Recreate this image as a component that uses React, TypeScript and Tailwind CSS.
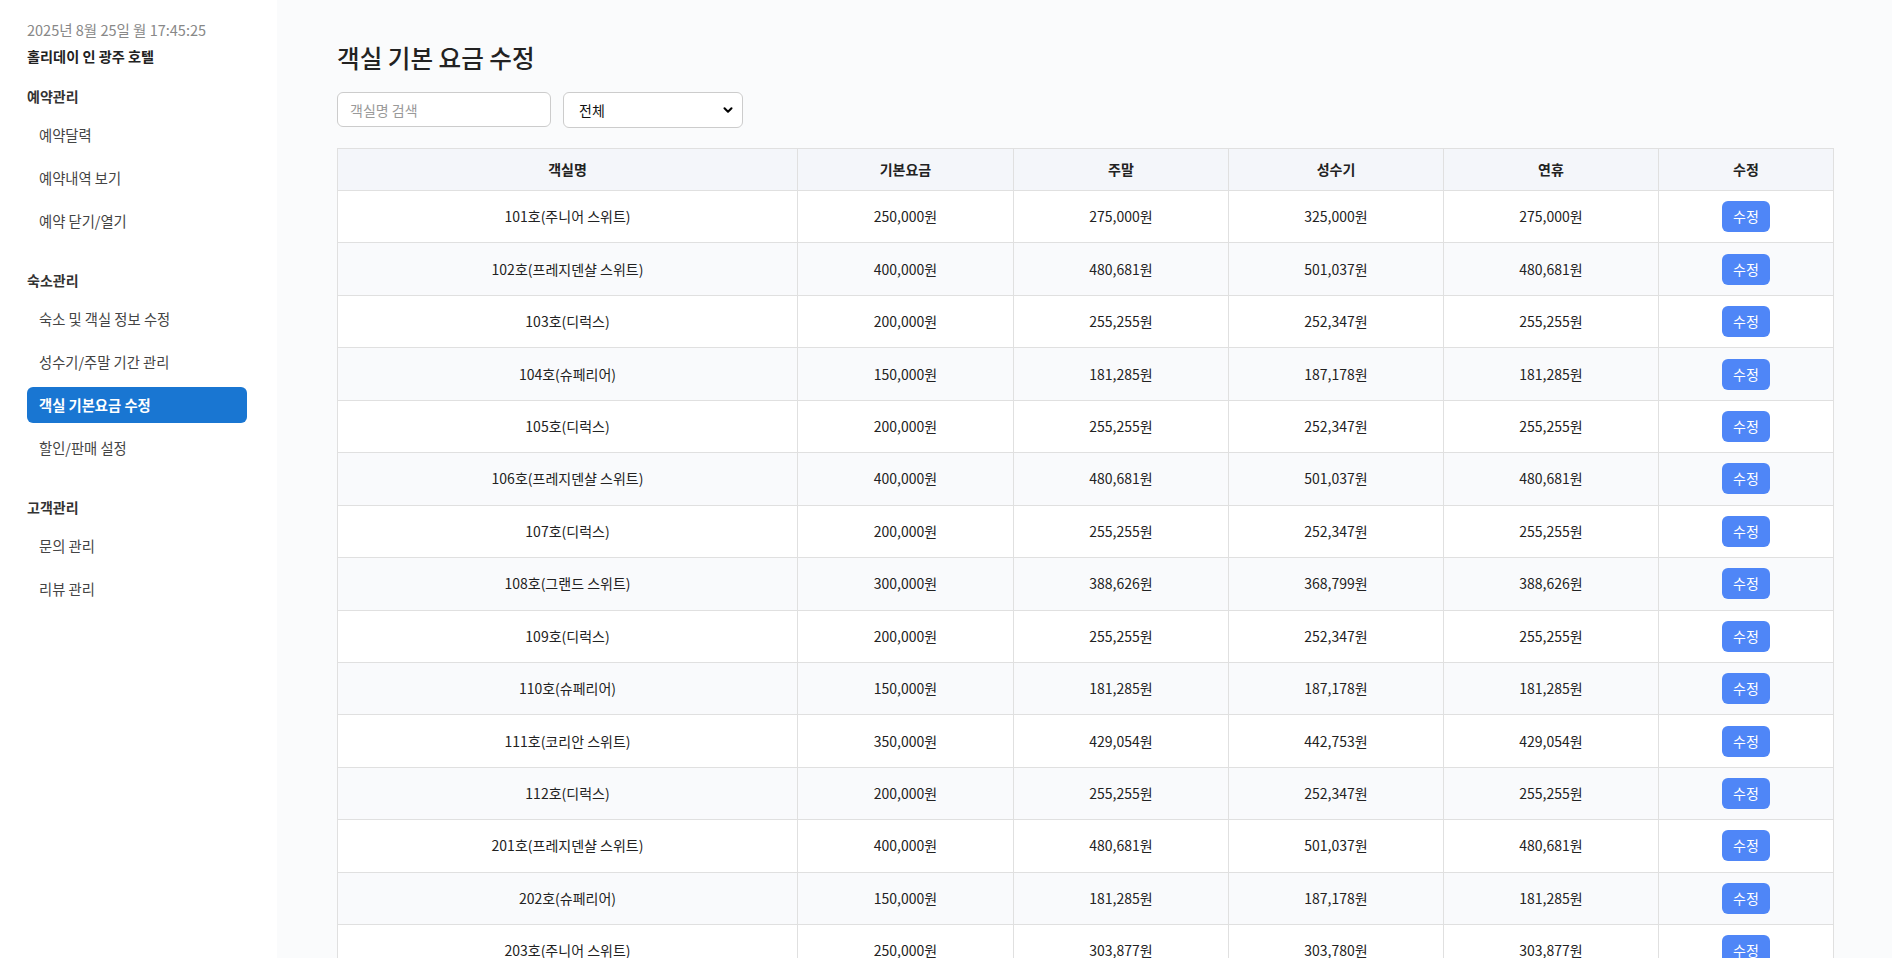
import { ChevronDown } from "lucide-react"

type Room = {
    name: string
    base: string
    weekend: string
    peak: string
    holiday: string
}

const rooms: Room[] = [
    { name: "101호(주니어 스위트)", base: "250,000원", weekend: "275,000원", peak: "325,000원", holiday: "275,000원" },
    { name: "102호(프레지덴샬 스위트)", base: "400,000원", weekend: "480,681원", peak: "501,037원", holiday: "480,681원" },
    { name: "103호(디럭스)", base: "200,000원", weekend: "255,255원", peak: "252,347원", holiday: "255,255원" },
    { name: "104호(슈페리어)", base: "150,000원", weekend: "181,285원", peak: "187,178원", holiday: "181,285원" },
    { name: "105호(디럭스)", base: "200,000원", weekend: "255,255원", peak: "252,347원", holiday: "255,255원" },
    { name: "106호(프레지덴샬 스위트)", base: "400,000원", weekend: "480,681원", peak: "501,037원", holiday: "480,681원" },
    { name: "107호(디럭스)", base: "200,000원", weekend: "255,255원", peak: "252,347원", holiday: "255,255원" },
    { name: "108호(그랜드 스위트)", base: "300,000원", weekend: "388,626원", peak: "368,799원", holiday: "388,626원" },
    { name: "109호(디럭스)", base: "200,000원", weekend: "255,255원", peak: "252,347원", holiday: "255,255원" },
    { name: "110호(슈페리어)", base: "150,000원", weekend: "181,285원", peak: "187,178원", holiday: "181,285원" },
    { name: "111호(코리안 스위트)", base: "350,000원", weekend: "429,054원", peak: "442,753원", holiday: "429,054원" },
    { name: "112호(디럭스)", base: "200,000원", weekend: "255,255원", peak: "252,347원", holiday: "255,255원" },
    { name: "201호(프레지덴샬 스위트)", base: "400,000원", weekend: "480,681원", peak: "501,037원", holiday: "480,681원" },
    { name: "202호(슈페리어)", base: "150,000원", weekend: "181,285원", peak: "187,178원", holiday: "181,285원" },
    { name: "203호(주니어 스위트)", base: "250,000원", weekend: "303,877원", peak: "303,780원", holiday: "303,877원" },
    { name: "204호(디럭스)", base: "200,000원", weekend: "255,255원", peak: "252,347원", holiday: "255,255원" },
    { name: "205호(슈페리어)", base: "150,000원", weekend: "181,285원", peak: "187,178원", holiday: "181,285원" },
]

const menu = [
    { title: "예약관리", items: ["예약달력", "예약내역 보기", "예약 닫기/열기"] },
    { title: "숙소관리", items: ["숙소 및 객실 정보 수정", "성수기/주말 기간 관리", "객실 기본요금 수정", "할인/판매 설정"] },
    { title: "고객관리", items: ["문의 관리", "리뷰 관리"] },
]

function Sidebar() {
    return (
        <aside className="w-[277px] shrink-0 bg-white pl-[27px] pr-[30px] pt-[20px]">
            <div className="text-[14.5px] leading-[20px] text-[#888]">2025년 8월 25일 월 17:45:25</div>
            <div className="mt-[6px] text-[14.2px] leading-[20px] font-bold text-[#222]">홀리데이 인 광주 호텔</div>

            <nav className="mt-[20px] flex flex-col gap-[31px]">
                {menu.map((section) => (
                    <div key={section.title}>
                        <div className="text-[14px] leading-[20px] font-bold text-[#333]">{section.title}</div>
                        <ul className="mt-[11px] flex flex-col gap-[7px]">
                            {section.items.map((item) => {
                                const active = item === "객실 기본요금 수정"
                                return (
                                    <li
                                        key={item}
                                        className={
                                            active
                                                ? "flex h-9 items-center rounded-[6px] bg-[#1976d2] pl-3 text-[14.3px] font-bold text-white"
                                                : "flex h-9 items-center rounded-[6px] pl-3 text-[14.3px] text-[#444]"
                                        }
                                    >
                                        {item}
                                    </li>
                                )
                            })}
                        </ul>
                    </div>
                ))}
            </nav>
        </aside>
    )
}

export default function App() {
    return (
        <div
            className="flex min-h-screen bg-[#fafbfc] text-[#222]"
            style={{ fontFamily: '"Noto Sans CJK KR", "Noto Sans", sans-serif' }}
        >
            <Sidebar />

            <main className="flex-1 px-[60px] pt-[40px] pb-10">
                <h1 className="text-[24.6px] leading-[34px] font-medium text-[#222]">객실 기본 요금 수정</h1>

                <div className="mt-[18px] flex gap-3">
                    <input
                        placeholder="객실명 검색"
                        className="h-[35px] w-[214px] rounded-[6px] border border-[#ccc] bg-white px-3 text-[14px] outline-none placeholder:text-[#999]"
                    />
                    <div className="relative">
                        <select className="h-9 w-[180px] appearance-none rounded-[6px] border border-[#ccc] bg-white pl-[15px] text-[14px] text-[#111] outline-none">
                            <option>전체</option>
                        </select>
                        <ChevronDown className="pointer-events-none absolute right-[8px] top-[11px] h-[14px] w-[14px] text-black" strokeWidth={3.5} />
                    </div>
                </div>

                <table className="mt-5 w-full table-fixed border-collapse bg-white text-[14px]">
                    <colgroup>
                        <col className="w-[460px]" />
                        <col className="w-[216px]" />
                        <col className="w-[215px]" />
                        <col className="w-[215px]" />
                        <col className="w-[215px]" />
                        <col className="w-[175px]" />
                    </colgroup>
                    <thead>
                        <tr className="bg-[#f4f6fa]">
                            {["객실명", "기본요금", "주말", "성수기", "연휴", "수정"].map((h) => (
                                <th key={h} className="h-[42px] border border-[#e0e0e0] text-center font-bold text-[#222]">
                                    {h}
                                </th>
                            ))}
                        </tr>
                    </thead>
                    <tbody>
                        {rooms.map((r, i) => (
                            <tr key={r.name} className={i % 2 === 1 ? "bg-[#f9fafc]" : "bg-white"}>
                                <td className="h-[52.45px] border border-[#e0e0e0] text-center">{r.name}</td>
                                <td className="border border-[#e0e0e0] text-center">{r.base}</td>
                                <td className="border border-[#e0e0e0] text-center">{r.weekend}</td>
                                <td className="border border-[#e0e0e0] text-center">{r.peak}</td>
                                <td className="border border-[#e0e0e0] text-center">{r.holiday}</td>
                                <td className="border border-[#e0e0e0] text-center">
                                    <button className="h-[31px] w-12 rounded-[6px] bg-[#4f86f7] text-[14px] text-white">수정</button>
                                </td>
                            </tr>
                        ))}
                    </tbody>
                </table>
            </main>
        </div>
    )
}
